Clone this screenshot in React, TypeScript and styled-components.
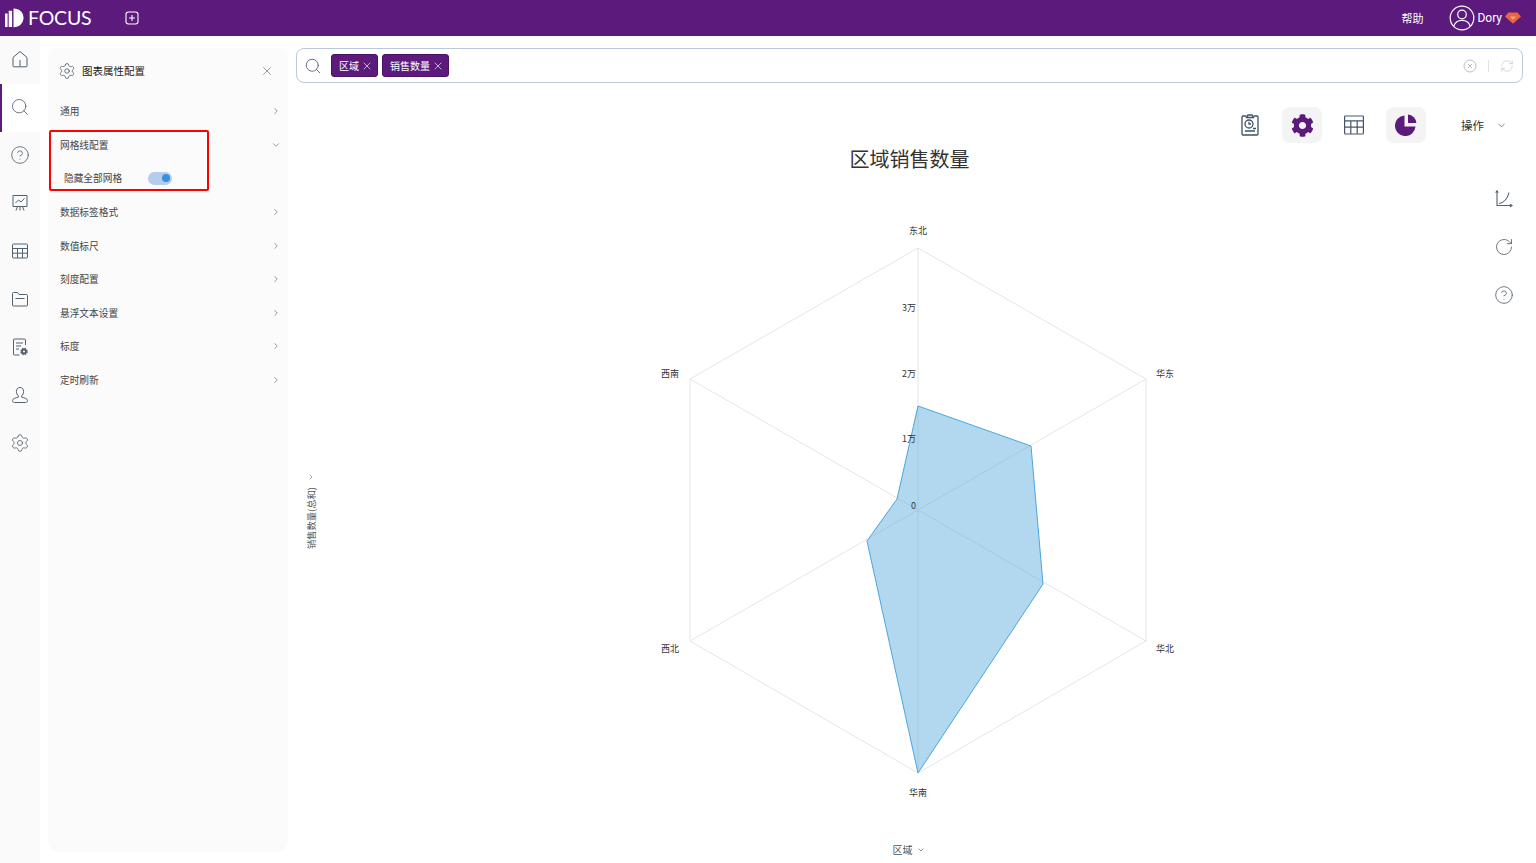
import React from 'react'
import styled, { createGlobalStyle } from 'styled-components'
import { ChevronDown, ChevronRight, CircleHelp, RefreshCw, RotateCw, Search, Settings, X } from 'lucide-react'
import { FaCog } from 'react-icons/fa'

const FONT = `"Noto Sans CJK SC", "Noto Sans", sans-serif`
const PURPLE = '#5c1a7c'
const ICON = '#53606f'

const GlobalStyle = createGlobalStyle`
  html, body { margin: 0; padding: 0; height: 100%; background: #fff; }
  body { font-family: ${FONT}; overflow: hidden; }
  *, *::before, *::after { box-sizing: border-box; }
`

const navIcons = [
  <svg viewBox="0 0 20 20" key="home"><path d="M3 8.500 10 2.500l7 6V17a.8.8 0 0 1-.8.8H3.800A.8.8 0 0 1 3 17Z" /><path d="M10 11v6.500" /></svg>,
  <Search key="search" strokeWidth={1.1} />,
  <CircleHelp key="help" strokeWidth={1.1} />,
  <svg viewBox="0 0 20 20" key="board"><path d="M3 2.500h14v11H3Z" /><path d="m5.500 10 3-3 2.500 2 3.500-3.500M6 17.500l1.500-4M14 17.500l-1.500-4M10 13.500v4" /></svg>,
  <svg viewBox="0 0 20 20" key="table"><rect x="2.500" y="3" width="15" height="14" rx="1" /><path d="M2.500 7.500h15M2.500 12.200h15M7.500 7.500V17M12.500 7.500V17" /></svg>,
  <svg viewBox="0 0 20 20" key="folder"><path d="M2.500 4.500a1 1 0 0 1 1-1h4l1.500 2h7.500a1 1 0 0 1 1 1V16a1 1 0 0 1-1 1h-13a1 1 0 0 1-1-1Z" /><path d="M5.500 9.500h9" /></svg>,
  <svg viewBox="0 0 20 20" key="report"><path d="M15.500 8V3a1 1 0 0 0-1-1h-10a1 1 0 0 0-1 1v14a1 1 0 0 0 1 1h5" /><path d="M6 6h7M6 9h5M6 12h3" /><circle cx="14" cy="14.500" r="2.800" fill={ICON} stroke={ICON} strokeWidth="1.800" strokeDasharray="1.500 .7" /><circle cx="14" cy="14.500" r="1" fill="#fff" stroke="none" /></svg>,
  <svg viewBox="0 0 20 20" key="user"><path d="M10 2.500c-2.300 0-3.600 1.700-3.600 4 0 1.900.8 3.400 1.900 4.300v1.400c-2.500.6-5.800 1.400-5.800 3.400 0 1.200.9 1.900 2 1.900h11c1.100 0 2-.7 2-1.900 0-2-3.300-2.800-5.800-3.400v-1.400c1.100-.9 1.900-2.400 1.900-4.300 0-2.300-1.300-4-3.600-4Z" /></svg>,
  <Settings key="settings" strokeWidth={1.05} />,
]

const menu = ['数据标签格式', '数值标尺', '刻度配置', '悬浮文本设置', '标度', '定时刷新']

const spokes = [
  [320, 38], [548, 169], [548, 431], [320, 563], [92, 431], [92, 169],
]
const area = '320,196 433,236 445,374 320,563 269,331 299,289'

const axisLabels = [
  { t: '东北', x: 320, y: 22 },
  { t: '华东', x: 567, y: 165 },
  { t: '华北', x: 567, y: 440 },
  { t: '华南', x: 320, y: 584 },
  { t: '西北', x: 72, y: 440 },
  { t: '西南', x: 72, y: 165 },
]
const scaleLabels = [
  { t: '3万', y: 99 },
  { t: '2万', y: 165 },
  { t: '1万', y: 230 },
  { t: '0', y: 297 },
]

export default function App() {
  return (
    <>
      <GlobalStyle />
      <Page>
        <TopBar>
          <Brand>
            <svg width="20" height="20" viewBox="0 0 20 20">
              <path fill="#fff" d="M0 5.500h2.600V19H0ZM3.700 2.800h3.400V19H3.700ZM8.500 0.500c6 0 10 4 10 9.300s-4 9.500-10 9.500Z" />
            </svg>
            <BrandName>FOCUS</BrandName>
          </Brand>
          <AddTab>
            <svg viewBox="0 0 14 14" width="14" height="14">
              <rect x="1" y="1" width="12" height="12" rx="2.500" />
              <path d="M7 4v6M4 7h6" />
            </svg>
          </AddTab>
          <Spacer />
          <HelpLink>帮助</HelpLink>
          <UserBox>
            <svg viewBox="0 0 26 26" width="26" height="26">
              <circle cx="13" cy="13" r="11.800" />
              <circle cx="13" cy="9.500" r="4.300" />
              <path d="M4.800 21c1.300-3.800 4.300-5.600 8.200-5.600s6.900 1.800 8.200 5.600" />
            </svg>
            <UserName>Dory</UserName>
            <svg viewBox="0 0 16 12" width="16" height="12">
              <path fill="#e8663f" d="M3.500.5h9L16 4.500 8 11.800 0 4.500Z" />
              <path fill="#f4a58a" d="M5 4.500h6L8 8Z" />
            </svg>
          </UserBox>
        </TopBar>
        <Body>
          <SideNav>
            {navIcons.map((icon, i) => (
              <NavItem key={i} $active={i === 1}>{icon}</NavItem>
            ))}
          </SideNav>
          <Panel>
            <PanelHeader>
              <Settings size={18} strokeWidth={1.05} color="#4a5666" />
              <PanelTitle>图表属性配置</PanelTitle>
              <CloseBtn><X size={14} strokeWidth={1.1} /></CloseBtn>
            </PanelHeader>
            <MenuRow>通用<ChevronRight size={10} /></MenuRow>
            <Highlighted>
              <MenuRow>网格线配置<ChevronDown size={10} /></MenuRow>
              <SubRow>
                隐藏全部网格
                <Toggle><Knob /></Toggle>
              </SubRow>
            </Highlighted>
            {menu.map(m => (
              <MenuRow key={m}>{m}<ChevronRight size={10} /></MenuRow>
            ))}
          </Panel>
          <Main>
            <SearchBar>
              <SearchGlyph><Search size={18} strokeWidth={1.1} color="#4a5666" /></SearchGlyph>
              <Tag>区域<X size={12} strokeWidth={1.3} /></Tag>
              <Tag>销售数量<X size={12} strokeWidth={1.3} /></Tag>
              <Spacer />
              <SearchTools>
                <svg viewBox="0 0 14 14" width="14" height="14" fill="none" stroke="#b9c0cc" strokeWidth="1">
                  <circle cx="7" cy="7" r="6" />
                  <path d="m5 5 4 4m0-4-4 4" />
                </svg>
                <Divider />
                <RefreshCw size={14} strokeWidth={1} color="#b9bec6" />
              </SearchTools>
            </SearchBar>
            <Toolbar>
              <ToolBtn>
                <svg viewBox="0 0 20 24" width="20" height="24" fill="none" stroke="#3d5068" strokeWidth="1.300">
                  <path d="M6.500 3H3a1 1 0 0 0-1 1v17a1 1 0 0 0 1 1h14a1 1 0 0 0 1-1V4a1 1 0 0 0-1-1h-3.500" />
                  <path d="M6.500 4.500 8 2h4l1.500 2.500Z" />
                  <circle cx="9" cy="11" r="4" />
                  <path d="M9 8.800V11h2M5 18h10M13 15.500h3" />
                </svg>
              </ToolBtn>
              <ToolBtn $on><FaCog size={23} color={PURPLE} /></ToolBtn>
              <ToolBtn>
                <svg viewBox="0 0 20 20" width="20" height="20" fill="none" stroke="#45566c" strokeWidth="1.200">
                  <rect x="0.600" y="1" width="18.800" height="18" rx=".8" />
                  <path d="M.6 5.800h18.800M.6 12.200h18.800M6.800 5.800V19M13.200 5.800V19" />
                </svg>
              </ToolBtn>
              <ToolBtn $on>
                <svg viewBox="0 0 22 22" width="22" height="22" fill={PURPLE}>
                  <path d="M9.500 1.500v11h11A10.300 10.300 0 1 1 9.500 1.500Z" />
                  <path d="M13 0.600a9 9 0 0 1 8.400 8.400H13Z" />
                </svg>
              </ToolBtn>
              <ActionMenu>操作<ChevronDown size={11} strokeWidth={1.3} /></ActionMenu>
            </Toolbar>
            <ChartTitle>区域销售数量</ChartTitle>
            <ChartRow>
              <YAxis>
                <ChevronRight size={8} color="#777" />
                <YAxisText>销售数量(总和)</YAxisText>
              </YAxis>
              <Canvas>
                <svg viewBox="0 0 640 620" width="640" height="620">
                  {spokes.map(([x, y]) => (
                    <line key={`${x}-${y}`} x1="320" y1="300" x2={x} y2={y} stroke="#e5e5e5" />
                  ))}
                  <polygon points={spokes.map(p => p.join(',')).join(' ')} fill="none" stroke="#e5e5e5" />
                  <polygon points={area} fill="rgba(86,170,220,.46)" stroke="#4ba5df" />
                  {axisLabels.map(l => (
                    <ChartText key={l.t} x={l.x} y={l.y} textAnchor="middle" dominantBaseline="middle">{l.t}</ChartText>
                  ))}
                  {scaleLabels.map(l => (
                    <ChartText key={l.t} x="318" y={l.y} textAnchor="end" dominantBaseline="middle">{l.t}</ChartText>
                  ))}
                </svg>
                <XAxis>区域<ChevronDown size={8} /></XAxis>
              </Canvas>
              <Rail>
                <svg viewBox="0 0 18 18" width="18" height="18" fill="none" stroke={ICON} strokeWidth="1.100">
                  <path d="M2 1v14.500h15" />
                  <path d="M.7 2.800 2 .8l1.300 2M15 14.200l2 1.300-2 1.300" />
                  <path d="M4 13.500c5-1 8.500-4.500 10-11" />
                </svg>
                <RotateCw size={20} strokeWidth={1} color={ICON} />
                <CircleHelp size={20} strokeWidth={1} color={ICON} />
              </Rail>
            </ChartRow>
          </Main>
        </Body>
      </Page>
    </>
  )
}

const Page = styled.div`
  display: flex;
  flex-direction: column;
  width: 100vw;
  height: 100vh;
  overflow: hidden;
  color: #333;
`

const TopBar = styled.header`
  display: flex;
  align-items: center;
  flex: none;
  height: 36px;
  padding: 0 15px 0 5px;
  background: ${PURPLE};
  color: #fff;
`

const Brand = styled.div`
  display: flex;
  align-items: center;
  gap: 3px;
`

const BrandName = styled.span`
  font-family: Lato, "Noto Sans", sans-serif;
  font-size: 19.500px;
  letter-spacing: -0.2px;
  line-height: 1;
`

const AddTab = styled.div`
  display: flex;
  margin-left: 34px;
  svg {
    fill: none;
    stroke: #fff;
    stroke-width: 1.1;
  }
`

const Spacer = styled.div`
  flex: 1;
`

const HelpLink = styled.span`
  font-size: 11px;
`

const UserBox = styled.div`
  display: flex;
  align-items: center;
  margin-left: 26px;
  svg:first-child {
    fill: none;
    stroke: #fff;
    stroke-width: 1.2;
  }
`

const UserName = styled.span`
  margin: 0 3px 0 2px;
  font-family: Roboto, sans-serif;
  font-size: 12px;
`

const Body = styled.div`
  display: flex;
  flex: 1;
  min-height: 0;
`

const SideNav = styled.nav`
  flex: none;
  width: 40px;
  background: #fafafa;
`

const NavItem = styled.div<{ $active?: boolean }>`
  display: flex;
  align-items: center;
  justify-content: center;
  height: 48px;
  padding: 0 2px 2px 0;
  background: ${p => (p.$active ? '#fff' : 'transparent')};
  border-left: 2px solid ${p => (p.$active ? PURPLE : 'transparent')};
  svg {
    width: 20px;
    height: 20px;
    fill: none;
    stroke: ${ICON};
    stroke-width: 1;
  }
`

const Panel = styled.aside`
  flex: none;
  width: 240px;
  margin: 12px 0 11px 8px;
  padding: 0;
  background: #fbfbfc;
  border-radius: 10px;
`

const PanelHeader = styled.div`
  display: flex;
  align-items: center;
  height: 46.400px;
  padding: 0 14px 0 10px;
`

const PanelTitle = styled.span`
  flex: 1;
  margin: 0 0 2px 6px;
  font-size: 10.500px;
  color: #222;
`

const CloseBtn = styled.span`
  display: flex;
  color: #666;
`

const MenuRow = styled.div`
  display: flex;
  align-items: center;
  justify-content: space-between;
  height: 33.600px;
  padding: 0 7.500px 0 12px;
  font-size: 9.700px;
  color: #444;
  svg {
    color: #888;
  }
`

const SubRow = styled.div`
  display: flex;
  align-items: center;
  height: 33.600px;
  padding: 0 0 0 16px;
  font-size: 9.700px;
  color: #444;
`

const Highlighted = styled.div`
  position: relative;
  &::after {
    content: '';
    position: absolute;
    left: 1px;
    top: 2px;
    width: 160px;
    height: 61px;
    border: 2px solid #ff0000;
    border-radius: 2px;
    pointer-events: none;
  }
`

const Toggle = styled.div`
  display: flex;
  align-items: center;
  justify-content: flex-end;
  width: 24px;
  height: 13px;
  margin-left: 26px;
  padding-right: 2px;
  background: #b4cdee;
  border-radius: 7px;
`

const Knob = styled.div`
  width: 8px;
  height: 8px;
  background: #3a8fe0;
  border-radius: 50%;
`

const Main = styled.main`
  position: relative;
  display: flex;
  flex: 1;
  flex-direction: column;
  min-width: 0;
  padding: 12px 13px 0 8px;
`

const SearchBar = styled.div`
  display: flex;
  align-items: center;
  flex: none;
  gap: 4px;
  height: 35px;
  padding: 0 8px 0 7px;
  border: 1px solid #b9c9da;
  border-radius: 8px;
`

const SearchGlyph = styled.span`
  display: flex;
  margin-right: 5px;
`

const Tag = styled.span`
  display: inline-flex;
  align-items: center;
  gap: 2px;
  height: 23px;
  padding: 0 4px 0 7px;
  background: ${PURPLE};
  border: 1px solid #4a1166;
  border-radius: 3px;
  color: #fff;
  font-size: 10px;
`

const SearchTools = styled.div`
  display: flex;
  align-items: center;
  gap: 11px;
`

const Divider = styled.span`
  width: 1px;
  height: 12px;
  background: #dfe2e6;
`

const Toolbar = styled.div`
  display: flex;
  align-items: center;
  justify-content: flex-end;
  flex: none;
  gap: 12px;
  height: 36px;
  margin-top: 24px;
  padding-right: 16px;
`

const ToolBtn = styled.div<{ $on?: boolean }>`
  display: flex;
  align-items: center;
  justify-content: center;
  width: 40px;
  height: 36px;
  background: ${p => (p.$on ? '#f4f4f4' : 'transparent')};
  border-radius: 8px;
`

const ActionMenu = styled.div`
  display: flex;
  align-items: center;
  gap: 12px;
  margin-left: 23px;
  font-size: 11.500px;
  color: #333;
`

const ChartTitle = styled.h1`
  flex: none;
  margin: 6px 0 0;
  font-size: 20px;
  font-weight: 400;
  line-height: 20px;
  text-align: center;
  color: #333;
`

const ChartRow = styled.div`
  position: relative;
  display: flex;
  flex: 1;
  min-height: 0;
`

const YAxis = styled.div`
  display: flex;
  flex: none;
  flex-direction: column;
  align-items: flex-end;
  gap: 6px;
  width: 22px;
  margin-right: -6px;
  padding-top: 304px;
  svg {
    margin-right: 3px;
  }
`

const YAxisText = styled.span`
  writing-mode: vertical-rl;
  text-orientation: sideways;
  transform: rotate(180deg);
  width: 14px;
  font-size: 9.300px;
  line-height: 14px;
  white-space: nowrap;
  color: #555;
`

const Canvas = styled.div`
  display: flex;
  flex: 1;
  flex-direction: column;
  align-items: center;
  padding-top: 41px;
  min-width: 0;
  svg {
    display: block;
  }
`

const ChartText = styled.text`
  font-family: ${FONT};
  font-size: 9px;
  fill: #333;
`

const XAxis = styled.div`
  display: flex;
  align-items: center;
  gap: 4px;
  margin-top: 12px;
  padding-right: 18px;
  font-size: 10px;
  color: #555;
`

const Rail = styled.div`
  position: absolute;
  top: 21px;
  right: 9px;
  display: flex;
  flex-direction: column;
  align-items: center;
  gap: 28.500px;
`
